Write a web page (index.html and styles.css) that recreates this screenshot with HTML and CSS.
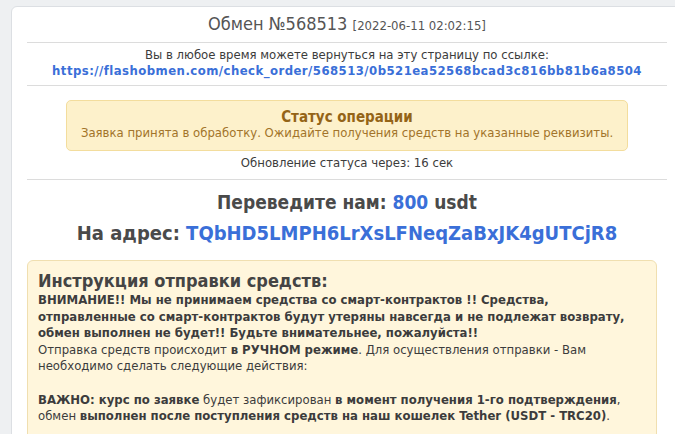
FILE: index.html
```html
<!DOCTYPE html>
<html lang="ru">
<head>
    <meta charset="UTF-8">
    <meta name="viewport" content="width=device-width, initial-scale=1.0">
    <title>Обмен №568513</title>
    <link rel="stylesheet" href="styles.css">
</head>
<body>
    <div class="page">
        <div class="order-card">
            <h1 class="order-title">Обмен №568513 <span class="order-date">[2022-06-11 02:02:15]</span></h1>
            <hr>
            <div class="order-link">
                <p>Вы в любое время можете вернуться на эту страницу по ссылке:</p>
                <a href="#">https://flashobmen.com/check_order/568513/0b521ea52568bcad3c816bb81b6a8504</a>
            </div>
            <hr>
            <div class="status-box">
                <div class="status-title">Статус операции</div>
                <div class="status-text">Заявка принята в обработку. Ожидайте получения средств на указанные реквизиты.</div>
            </div>
            <p class="status-refresh">Обновление статуса через: <span id="timer">16</span> сек</p>
            <hr>
            <div class="pay-info">
                <p class="pay-sum">Переведите нам: <span class="accent">800</span> usdt</p>
                <p class="pay-addr">На адрес: <span class="accent">TQbHD5LMPH6LrXsLFNeqZaBxJK4gUTCjR8</span></p>
            </div>
            <div class="instruction">
                <h2>Инструкция отправки средств:</h2>
                <p class="warning">ВНИМАНИЕ!! Мы не принимаем средства со смарт-контрактов !! Средства, отправленные со смарт-контрактов будут утеряны навсегда и не подлежат возврату, обмен выполнен не будет!! Будьте внимательнее, пожалуйста!!</p>
                <p>Отправка средств происходит <b>в РУЧНОМ режиме</b>. Для осуществления отправки - Вам необходимо сделать следующие действия:</p>
                <p><b>ВАЖНО: курс по заявке</b> будет зафиксирован <b>в момент получения 1-го подтверждения</b>, обмен <b>выполнен после поступления средств на наш кошелек Tether (USDT - TRC20)</b>.</p>
                <p><b>1.</b> Зайдите в свой кошелек Tether (USDT - TRC20).</p>
            </div>
        </div>
    </div>
</body>
</html>
```

FILE: styles.css
```css
html, body {
    margin: 0;
    overflow: hidden;
}

body {
    background: #eef0f2;
    font-family: "DejaVu Sans Condensed", "DejaVu Sans", sans-serif;
    font-size: 13px;
    color: #3c3c3c;
}

.page {
    padding: 6px 0 0 11px;
}

.order-card {
    width: 640px;
    background: white;
    border: 1px solid #dcdfe3;
    border-radius: 6px;
    padding: 0 30px 20px 15px;
}

hr {
    border: none;
    border-top: 1px solid #dcdcdc;
    margin: 0;
}

.order-title {
    font-size: 18px;
    font-weight: normal;
    color: #555;
    text-align: center;
    margin: 0;
    padding: 6px 0 8px;
}

.order-date {
    font-size: 13px;
}

.order-link {
    text-align: center;
    padding: 4px 0 6px;
    line-height: 16px;
}

.order-link p {
    margin: 0;
}

.order-link a {
    color: #3a6fd8;
    font-weight: bold;
    text-decoration: none;
    letter-spacing: 0.45px;
}

.status-box {
    margin: 14px 39px 0;
    background: #fdf1cb;
    border: 1px solid #f3dd9d;
    border-radius: 5px;
    text-align: center;
    padding: 8px 0 9px;
    line-height: 16px;
}

.status-title {
    color: #946417;
    font-weight: bold;
    font-size: 15px;
}

.status-text {
    color: #a2742a;
}

.status-refresh {
    text-align: center;
    margin: 4px 0 9px;
}

.pay-info {
    text-align: center;
    font-weight: bold;
    color: #4a4a4a;
    padding-top: 11px;
}

.pay-info p {
    margin: 0;
}

.pay-sum {
    font-size: 19px;
}

.pay-addr {
    font-size: 20px;
    margin-top: 8px !important;
}

.accent {
    color: #3a6fd8;
}

.instruction {
    margin: 15px 10px 0 0;
    background: #fff6dc;
    border: 1px solid #f0dfb0;
    border-radius: 6px;
    padding: 9px 10px 10px;
    line-height: 16.6px;
    color: #3c3c3c;
}

.instruction h2 {
    font-size: 18px;
    margin: 0;
    line-height: 22px;
    color: #444;
}

.instruction p {
    margin: 0 0 16.6px;
}

.instruction .warning {
    font-weight: bold;
    margin: 0;
}
```
